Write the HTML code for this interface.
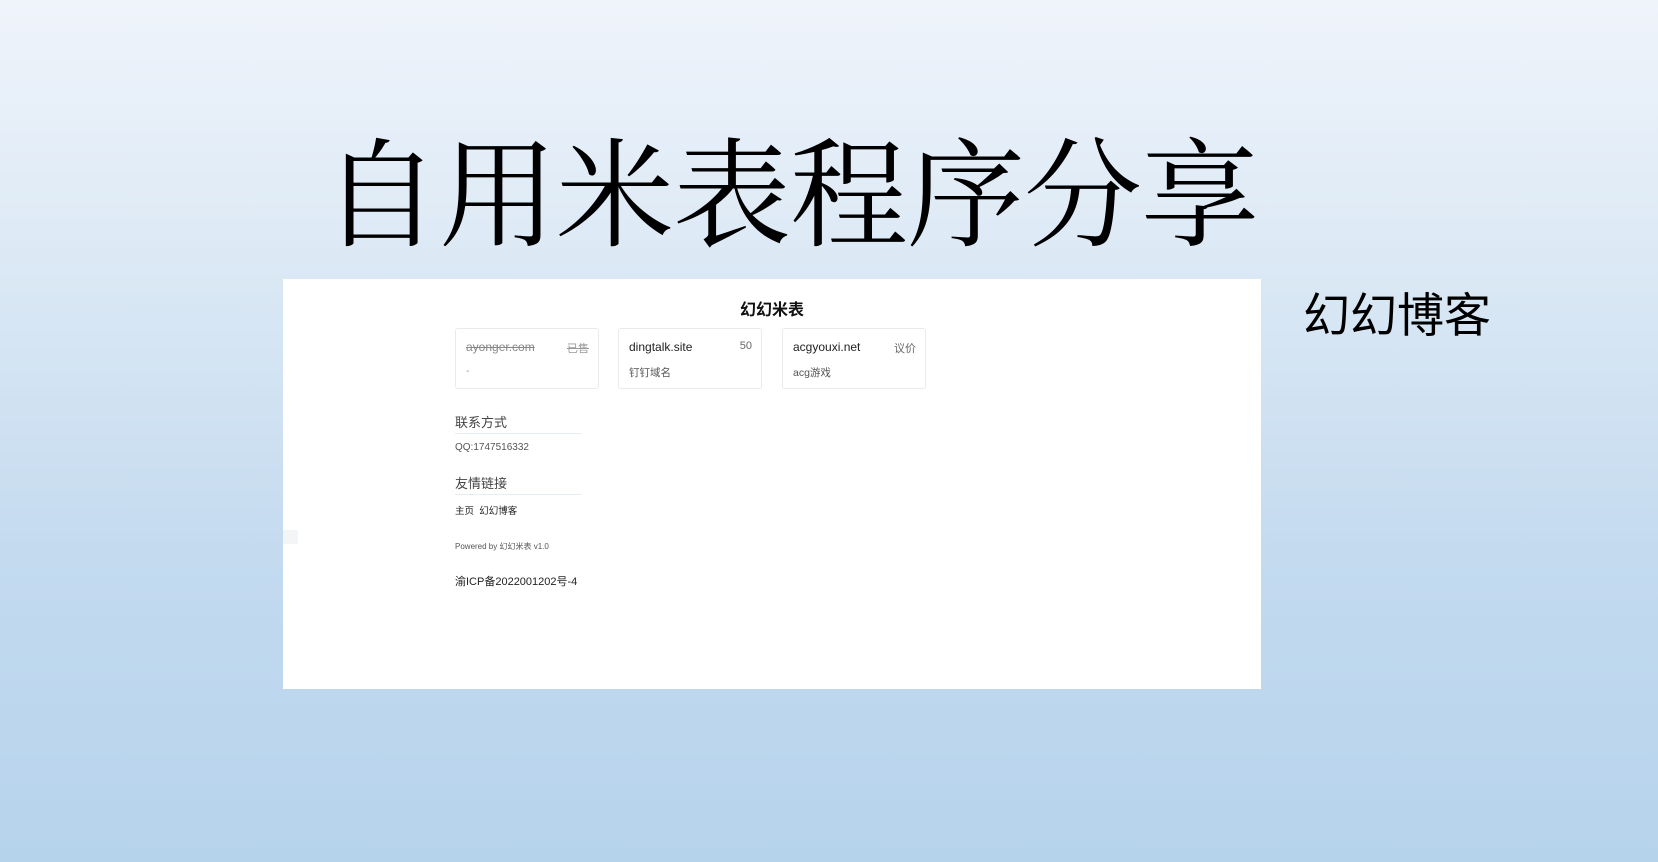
<!DOCTYPE html>
<html><head><meta charset="utf-8"><style>
*{margin:0;padding:0;box-sizing:border-box}
html,body{width:1658px;height:862px;overflow:hidden}
body{background:linear-gradient(180deg,#eff4fb 0%,#dce9f5 30%,#c3daef 65%,#b6d3ec 100%);font-family:"Liberation Sans","Noto Sans CJK SC",sans-serif;position:relative}
.big{position:absolute;left:322px;top:123px;font-family:"Liberation Serif","Noto Serif CJK SC",serif;font-size:118px;line-height:150px;color:#000;white-space:nowrap;letter-spacing:-1px}
.blog{position:absolute;left:1303px;top:286px;font-size:47px;line-height:60px;color:#000;font-weight:400}
.panel{position:absolute;left:283px;top:279px;width:978px;height:410px;background:#fff}
.t{position:absolute;left:0;width:978px;top:17px;text-align:center;font-size:16px;font-weight:bold;color:#111}
.card{position:absolute;top:49px;width:144px;height:61px;border:1px solid #e8ebee;border-radius:3px}
.card .d{position:absolute;left:10px;top:11px;font-size:12px;color:#222}
.card .p{position:absolute;right:9px;top:11px;font-size:11px;color:#666}
.card .s{position:absolute;left:10px;top:36px;font-size:10.5px;color:#555}
.h{position:absolute;left:172px;width:127px;font-size:13px;color:#444;border-bottom:1px solid #e6eef2;padding-bottom:2px}
.x{position:absolute;left:172px;font-size:10px;color:#555}
</style></head><body>
<div class="big">自用米表程序分享</div>
<div class="blog">幻幻博客</div>
<div class="panel">
<div class="t">幻幻米表</div>
<div class="card" style="left:172px"><span class="d" style="color:#888;text-decoration:line-through">ayonger.com</span><span class="p" style="color:#999;text-decoration:line-through">已售</span><span class="s" style="color:#999">-</span></div>
<div class="card" style="left:335px"><span class="d">dingtalk.site</span><span class="p">50</span><span class="s">钉钉域名</span></div>
<div class="card" style="left:499px"><span class="d">acgyouxi.net</span><span class="p">议价</span><span class="s">acg游戏</span></div>
<div class="h" style="top:133px">联系方式</div>
<div class="x" style="top:163px">QQ:1747516332</div>
<div class="h" style="top:194px">友情链接</div>
<div class="x" style="top:224px;color:#222;font-size:9.5px">主页&nbsp;&nbsp;幻幻博客</div>
<div class="x" style="top:262px;font-size:8px">Powered by 幻幻米表 v1.0</div>
<div class="x" style="top:294px;font-size:11px;color:#222">渝ICP备2022001202号-4</div>
<div style="position:absolute;left:0;top:251px;width:15px;height:14px;background:#f3f5f7"></div>
</div>
</body></html>
